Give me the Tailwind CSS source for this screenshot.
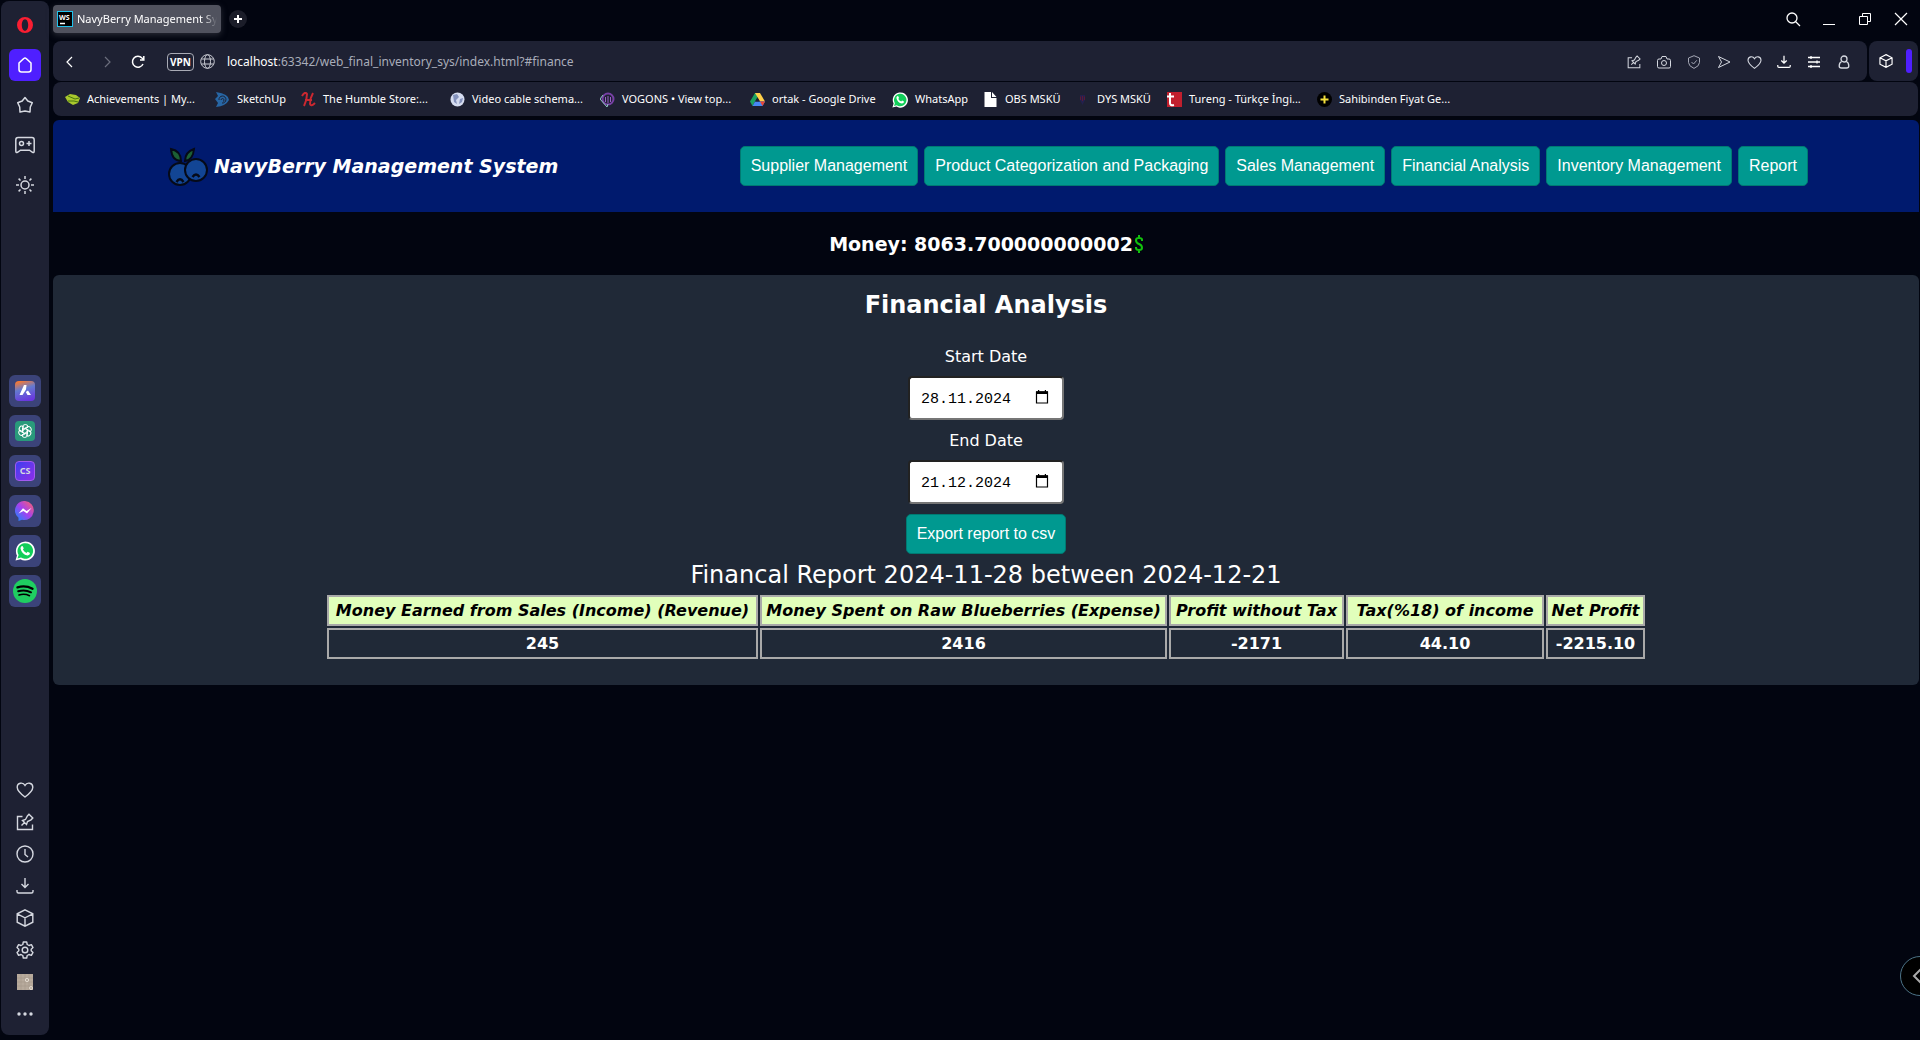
<!DOCTYPE html>
<html lang="en">
<head>
<meta charset="utf-8">
<title>NavyBerry Management System</title>
<script src="https://cdn.jsdelivr.net/npm/@tailwindcss/browser@4"></script>
</head>
<body class="flex min-h-screen gap-1 overflow-x-hidden bg-[#020510] px-px font-['Noto_Sans',sans-serif] text-white">

<!-- shared icon symbols -->
<svg class="hidden">
  <symbol id="heart" viewBox="0 0 18 18"><path d="M9 16C5 13 1.2 10 1.2 6.2 1.2 1.6 7 .8 9 4.4 11 .8 16.800 1.600 16.800 6.200 16.800 10 13 13 9 16Z"/></symbol>
  <symbol id="pin" viewBox="0 0 18 18"><path d="M6.500 3.500H1.500V16.500H16.500V11.500M5.500 12.500 9 9M6.500 7.500 10.500 11.500 11.500 8.500 15 6.800 16.800 5 13 1.200 11.400 3 9.500 6.500Z"/></symbol>
  <symbol id="down" viewBox="0 0 18 18"><path d="M9 1V10.500M5.500 7 9 10.500 12.500 7M1 13V14.500Q1 16 2.500 16H15.500Q17 16 17 14.500V13"/></symbol>
  <symbol id="cube" viewBox="0 0 18 18"><path d="M9 .8 16.800 4.800V13.200L9 17.200 1.200 13.200V4.800ZM1.200 4.800 9 8.800 16.800 4.800M9 8.800V17.200"/></symbol>
  <symbol id="calendar" viewBox="0 0 14 14"><path d="M1.500 2H12.500V13H1.500Z" fill="none" stroke="#000" stroke-width="1.200"/><path d="M1 1.200H13V4H1ZM3 0H4.200V2H3ZM9.800 0H11V2H9.800Z" fill="#000"/></symbol>
  <symbol id="whatsapp" viewBox="0 0 20 20"><path d="M.5 19.500 2 14.500A9.500 9.500 0 1 1 5.500 18.200Z" fill="#fff"/><path d="M2.500 17.500 3.600 14A7.800 7.800 0 1 1 6 16.500Z" fill="#12ce5a"/><path d="M6.500 5.300Q7.600 4.700 8 5.700L8.700 7.300Q8.700 7.800 7.900 8.600 9 10.800 11.500 11.900L12.600 10.700 15 11.900Q15 14.300 12.500 14.400 6.800 13.500 5.500 7.500 5.500 6.200 6.500 5.300Z" fill="#fff"/></symbol>
</svg>

<aside class="mt-px mb-[5px] flex w-12 shrink-0 flex-col items-center rounded-lg bg-[#1e2133] pb-3 text-[#d5d8e0]">
  <a href="#opera" aria-label="Opera" class="mt-4 block"><svg class="size-4" viewBox="0 0 16 16"><path fill="#fa1e32" fill-rule="evenodd" d="M8 0a8 8 0 1 0 0 16A8 8 0 0 0 8 0ZM8 2.200C10 2.200 11.200 5 11.200 8S10 13.800 8 13.800 4.800 11 4.800 8 6 2.200 8 2.200Z"/></svg></a>
  <nav class="mt-4 flex flex-col gap-2" aria-label="Workspaces">
    <a href="#home" aria-label="Home" class="grid size-8 place-items-center rounded-md bg-[#4f1fff]"><svg class="size-4 fill-none stroke-white stroke-[1.5]" viewBox="0 0 16 16"><path d="M8 1Q9 1 14 6V12.500Q14 15 11.500 15H4.500Q2 15 2 12.500V6Q7 1 8 1Z"/></svg></a>
    <a href="#star" aria-label="Favourites" class="grid size-8 place-items-center"><svg class="size-[18px] fill-none stroke-current stroke-[1.5]" viewBox="0 0 18 18" stroke-linejoin="round"><path d="M9 1.500 11.800 5 16.300 6.800 14.300 11 14 16 9 15 4 16 3.700 11 1.700 6.800 6.200 5Z"/></svg></a>
    <a href="#games" aria-label="Games" class="grid size-8 place-items-center"><svg class="size-5 fill-none stroke-current stroke-[1.5]" viewBox="0 0 20 20"><path d="M3 2.500H17Q19.200 2.500 19.200 5V16Q19.200 18 17.500 17.300L14.500 15.200H5.500L2.500 17.300Q.8 18 .8 16V5Q.8 2.500 3 2.500ZM14 6V11M11.500 8.500H16.500"/><circle cx="6.500" cy="8.500" r="2"/></svg></a>
    <a href="#theme" aria-label="Theme" class="grid size-8 place-items-center"><svg class="size-5 fill-none stroke-current stroke-[1.5]" viewBox="0 0 20 20"><circle cx="10" cy="10" r="4"/><path d="M10 1V4M10 16V19M1 10H4M16 10H19M3.600 3.600 5.500 5.500M14.500 14.500 16.400 16.400M3.600 16.400 5.500 14.500M14.500 5.500 16.400 3.600"/></svg></a>
  </nav>
  <nav class="my-auto flex flex-col gap-2" aria-label="Messengers">
    <a href="#aria" aria-label="Aria" class="grid size-8 place-items-center rounded-md bg-[#3b4379]"><svg class="size-5" viewBox="0 0 20 20"><defs><linearGradient id="ag" x1=".3" y1="0" x2=".6" y2="1"><stop stop-color="#f57935"/><stop offset=".4" stop-color="#637ad0"/><stop offset="1" stop-color="#6b35e0"/></linearGradient></defs><rect width="20" height="20" rx="4" fill="url(#ag)"/><path d="M9 4H11.500L11 8.500 7.500 14H4.500ZM10.800 11 13 9.500 16 14H12.500Z" fill="#fff"/></svg></a>
    <a href="#chatgpt" aria-label="ChatGPT" class="grid size-8 place-items-center rounded-md bg-[#3b4379]"><span class="grid size-5 place-items-center rounded bg-[#299a7b]"><svg class="size-4 fill-none stroke-white" viewBox="0 0 16 16"><g id="petal"><path d="M5.500 9.500V4.500Q5.500 1.500 8.300 1.500T11 4.200L7 6.500"/></g><use href="#petal" transform="rotate(60 8 8)"/><use href="#petal" transform="rotate(120 8 8)"/><use href="#petal" transform="rotate(180 8 8)"/><use href="#petal" transform="rotate(240 8 8)"/><use href="#petal" transform="rotate(300 8 8)"/></svg></span></a>
    <a href="#chatsonic" class="grid size-8 place-items-center rounded-md bg-[#3b4379]"><span class="grid size-5 place-items-center rounded border border-[#a35af0] bg-linear-to-br from-[#3a3cf0] to-[#8b2be8] text-[9px] font-bold">CS</span></a>
    <a href="#messenger" aria-label="Messenger" class="grid size-8 place-items-center rounded-md bg-[#3b4379]"><svg class="size-5" viewBox="0 0 20 20"><defs><linearGradient id="mg" x1="0" y1="1" x2="1" y2="0"><stop stop-color="#0d8fff"/><stop offset=".5" stop-color="#a440f0"/><stop offset="1" stop-color="#ff6464"/></linearGradient></defs><path fill="url(#mg)" d="M10 0A9.500 9.500 0 1 1 7 18.700L3.500 20V16.800A9.500 9.500 0 0 1 10 0Z"/><path fill="#fff" d="M3.500 12.500 8 7.200 11.500 10 16.500 7 12 12.600 8.500 10Z"/></svg></a>
    <a href="#whatsapp-panel" aria-label="WhatsApp" class="grid size-8 place-items-center rounded-md bg-[#3b4379]"><svg class="size-5"><use href="#whatsapp"/></svg></a>
    <a href="#spotify" aria-label="Spotify" class="grid size-8 place-items-center rounded-md bg-[#3b4379]"><svg class="size-6" viewBox="0 0 24 24"><circle cx="12" cy="12" r="12" fill="#1fce61"/><g fill="none" stroke="#000" stroke-linecap="round"><path d="M4.500 8.300Q12.500 6 19.500 9.700" stroke-width="2.400"/><path d="M5.200 12.300Q12 10.300 18 13.300" stroke-width="2"/><path d="M6 16Q11.500 14.300 16.500 16.700" stroke-width="1.600"/></g></svg></a>
  </nav>
  <nav class="flex flex-col items-center gap-[14px] *:block" aria-label="Tools">
    <a href="#likes" aria-label="Likes"><svg class="size-[18px] fill-none stroke-current stroke-[1.4]"><use href="#heart"/></svg></a>
    <a href="#pins" aria-label="Pinboards"><svg class="size-[18px] fill-none stroke-current stroke-[1.4]"><use href="#pin"/></svg></a>
    <a href="#history" aria-label="History"><svg class="size-[18px] fill-none stroke-current stroke-[1.4]" viewBox="0 0 18 18"><circle cx="9" cy="9" r="8"/><path d="M9 4V9.500L12 12"/></svg></a>
    <a href="#downloads" aria-label="Downloads"><svg class="size-[18px] fill-none stroke-current stroke-[1.4]"><use href="#down"/></svg></a>
    <a href="#extensions" aria-label="Extensions"><svg class="size-[18px] fill-none stroke-current stroke-[1.4]"><use href="#cube"/></svg></a>
    <a href="#settings" aria-label="Settings"><svg class="size-[18px] fill-none stroke-current stroke-[1.4]" viewBox="0 0 18 18" stroke-linejoin="round"><circle cx="9" cy="9" r="2.800"/><path d="M7.300 1H10.700L11.200 3.500 13 4.500 15.400 3.700 17 6.600 15.200 8.200V9.800L17 11.400 15.400 14.300 13 13.500 11.200 14.500 10.700 17H7.300L6.800 14.500 5 13.500 2.600 14.300 1 11.400 2.800 9.800V8.200L1 6.600 2.600 3.700 5 4.500 6.800 3.500Z"/></svg></a>
    <a href="#board" aria-label="Board"><svg class="size-[18px]" viewBox="0 0 18 18"><path d="M1 1H17V17H1Z" fill="#b7aa9c"/><path d="M1 5H17M1 9H17M1 13H17M5 1V17M9 1V17M13 1V17" stroke="#a5988b" stroke-width=".6"/><circle cx="11" cy="7" r="1.700" fill="none" stroke="#e2dad0"/><circle cx="15" cy="15" r="1.500" fill="none" stroke="#e2dad0"/></svg></a>
    <a href="#more" aria-label="More"><svg class="size-[18px] fill-current" viewBox="0 0 18 18"><circle cx="3" cy="9" r="1.700"/><circle cx="9" cy="9" r="1.700"/><circle cx="15" cy="9" r="1.700"/></svg></a>
  </nav>
</aside>

<div class="flex min-w-0 flex-1 flex-col">
  <div class="flex h-[41px] shrink-0 items-center pr-[10px] pb-[3px]">
    <div class="flex h-7 w-42 items-center gap-1 overflow-hidden rounded-sm bg-[#50525e] px-1 shadow-[0_2px_6px_#50525e80]">
      <svg class="size-4 shrink-0" viewBox="0 0 16 16"><rect x=".5" y=".5" width="15" height="15" stroke="#1fc3ee"/><path d="M3 12.500H8" stroke="#fff" stroke-width="1.300"/><text x="2" y="8.500" font-size="7" font-weight="700" fill="#fff">WS</text></svg>
      <span class="overflow-hidden mask-r-from-90% text-[11px] whitespace-nowrap">NavyBerry Management System</span>
    </div>
    <button aria-label="New tab" class="ml-2 grid size-[18px] place-items-center rounded-full bg-[#1b1d29]"><svg class="size-2 stroke-white stroke-2" viewBox="0 0 8 8"><path d="M4 0V8M0 4H8"/></svg></button>
    <div class="ml-auto flex gap-5 *:grid *:size-4 *:place-items-center">
      <button aria-label="Search tabs"><svg class="size-4 fill-none stroke-white stroke-[1.3]" viewBox="0 0 16 16"><circle cx="7" cy="7" r="5"/><path d="M10.500 10.500 15 15"/></svg></button>
      <button aria-label="Minimise"><svg class="size-4 stroke-white" viewBox="0 0 16 16"><path d="M2 13.500H14"/></svg></button>
      <button aria-label="Restore"><svg class="size-4 fill-none stroke-white" viewBox="0 0 16 16"><path d="M2.500 5.500H10.500V13.500H2.500ZM5.500 5.500V2.500H13.500V10.500H10.500"/></svg></button>
      <button aria-label="Close"><svg class="size-4 stroke-white stroke-[1.2]" viewBox="0 0 16 16"><path d="M2 2 14 14M14 2 2 14"/></svg></button>
    </div>
  </div>

  <div class="mb-px flex h-10 shrink-0 gap-0.5 pr-px">
    <div class="flex flex-1 items-center rounded-lg bg-[#1e2133] px-3 pt-px text-xs">
      <button aria-label="Back" class="w-9"><svg class="h-3 w-2 fill-none stroke-white stroke-[1.2]" viewBox="0 0 8 12"><path d="M7 1 2 6 7 11"/></svg></button>
      <button aria-label="Forward" class="w-[30px]"><svg class="h-3 w-3 fill-none stroke-[#6b6e7d] stroke-[1.2]" viewBox="0 0 12 12"><path d="M4 1 9 6 4 11"/></svg></button>
      <button aria-label="Reload" class="w-9"><svg class="size-[14px] fill-none stroke-white stroke-[1.5]" viewBox="0 0 14 14"><path d="M12 9A5.500 5.500 0 1 1 11 3L12 4M12.800 1V5H9"/></svg></button>
      <button class="h-[18px] w-[27px] rounded border border-[#a9abb5] text-[10px] leading-4 font-bold">VPN</button>
      <svg class="ml-1.5 size-[15px] fill-none stroke-[#c9cbd3]" viewBox="0 0 15 15"><circle cx="7.500" cy="7.500" r="6.800"/><ellipse cx="7.500" cy="7.500" rx="3" ry="6.800"/><path d="M1.500 5H13.500M1.500 10H13.500"/></svg>
      <a href="#finance" class="ml-3 text-[#a9adba]"><span class="text-white">localhost</span>:63342/web_final_inventory_sys/index.html?#finance</a>
      <div class="ml-auto flex gap-4 pr-1 text-[#d5d8e0] *:grid *:size-[14px] *:place-items-center">
        <button aria-label="Pin"><svg class="size-[14px] fill-none stroke-current stroke-[1.3]"><use href="#pin"/></svg></button>
        <button aria-label="Snapshot"><svg class="size-[14px] fill-none stroke-current" viewBox="0 0 14 14"><path d="M2 4H4L5 1.500H9L10 4H12Q13.500 4 13.500 5.500V11.500Q13.500 13 12 13H2Q.5 13 .5 11.500V5.500Q.5 4 2 4Z"/><circle cx="7" cy="8" r="2.500"/></svg></button>
        <button aria-label="Shield"><svg class="size-[14px] fill-none stroke-[#a5a8b5]" viewBox="0 0 14 14"><path d="M7 .7 12.500 3V7.500Q12.500 11 7 13.400 1.500 11 1.500 7.500V3ZM4.500 7 6.500 9 9.800 5.300"/></svg></button>
        <button aria-label="Send"><svg class="size-[14px] fill-none stroke-current" viewBox="0 0 14 14"><path d="M1.500 1.500 13 7 1.500 12.500 4.500 7Z"/></svg></button>
        <button aria-label="Favourite"><svg class="size-[15px] fill-none stroke-current stroke-[1.3]"><use href="#heart"/></svg></button>
        <button aria-label="Download"><svg class="size-[14px] fill-none stroke-white stroke-[1.6]"><use href="#down"/></svg></button>
        <button aria-label="Easy setup"><svg class="size-[14px] fill-none stroke-white stroke-[1.3]" viewBox="0 0 14 14"><path d="M1 2.500H13M1 7H13M1 11.500H13M4 1V4M10 5.500V8.500M4 10V13"/></svg></button>
        <button aria-label="Profile"><svg class="size-[14px] fill-none stroke-current stroke-[1.3]" viewBox="0 0 14 14"><circle cx="7" cy="4" r="3"/><path d="M4.700 6.500Q2.200 7.500 2.200 11 2.200 13 4.500 13H9.500Q11.800 13 11.800 11 11.800 7.500 9.300 6.500"/></svg></button>
      </div>
    </div>
    <div class="flex w-[49px] items-center justify-between rounded-lg bg-[#1e2133] pr-1.5 pl-[10px]">
      <button aria-label="Extensions"><svg class="size-[14px] fill-none stroke-white stroke-[1.5]"><use href="#cube"/></svg></button>
      <span class="h-6 w-1.5 rounded-full bg-[#4f1fff]"></span>
    </div>
  </div>

  <nav aria-label="Bookmarks" class="mr-px mb-1 flex h-[34px] shrink-0 items-center rounded-lg bg-[#1e2133] pt-px pl-3 text-[11px] whitespace-nowrap *:flex *:shrink-0 *:items-center *:gap-[7px]">
    <a href="#b1" class="w-[150px]"><svg class="size-[15px]" viewBox="0 0 15 15"><path d="M0 5 5 2 11 3 15 6 13 11 8 13 3 10Z" fill="#a9c82d"/><path d="M3 4 10 7 14 6M3 9 9 9 13 10" stroke="#47750e" fill="none"/></svg>Achievements | My...</a>
    <a href="#b2" class="w-[86px]"><svg class="size-[15px]" viewBox="0 0 15 15"><path d="M1 0Q14 2 14 8 11 14 1 15L3 11 0 7 3 4Z" fill="#2766a5"/><path d="M4 8A3.500 3.500 0 1 1 7 11M6 8A1.500 1.500 0 1 1 8 9.500" stroke="#1e2133" fill="none"/></svg>SketchUp</a>
    <a href="#b3" class="w-[149px]"><svg class="size-[15px] fill-none stroke-[#cb2830] stroke-2" viewBox="0 0 15 15"><path d="M1 4Q4 -1 6 2 6 8 3 14M12 1Q9 6 9 12 10 15 14 11M4 8H11"/></svg>The Humble Store:...</a>
    <a href="#b4" class="w-[150px]"><svg class="size-[15px]" viewBox="0 0 15 15"><circle cx="7.500" cy="7.500" r="7" fill="#d5dcf0"/><path d="M3 3 7 2 9 5 6 8 7 12 4 10ZM10 7 13 6 12 10 9 12Z" fill="#8492bd"/></svg>Video cable schema...</a>
    <a href="#b5" class="w-[150px]"><svg class="size-[15px] fill-none" viewBox="0 0 15 15"><circle cx="8" cy="7" r="5.500" stroke="#7740a5" stroke-width="2"/><path d="M8 4V11M5.500 5V10M10.500 5V10" stroke="#9862c4"/><path d="M3 3 0 7 7 15 8 12" stroke="#8fc9c2"/></svg>VOGONS • View top...</a>
    <a href="#b6" class="w-[142px]"><svg class="size-[15px]" viewBox="0 0 15 15"><path d="M5 1H10L5 9.500 2.500 14 0 9.500Z" fill="#1ba261"/><path d="M5 1H10L15 9.500H10Z" fill="#ffcf48"/><path d="M5 9.500H15L12.500 14H2.500Z" fill="#4688f4"/><path d="M10 9.500H15L12.500 14Z" fill="#ea4435"/><path d="M7.500 5.500 9.800 9.500H5.200Z" fill="#1e2133"/></svg>ortak - Google Drive</a>
    <a href="#b7" class="w-[91px]"><svg class="size-4"><use href="#whatsapp"/></svg>WhatsApp</a>
    <a href="#b8" class="w-[92px]"><svg class="size-[15px] fill-white" viewBox="0 0 15 15"><path d="M1.500 0H8V6H13.500V15H1.500ZM9 0 13.500 5H9Z"/></svg>OBS MSKÜ</a>
    <a href="#b9" class="w-[92px]"><svg class="size-[15px]" viewBox="0 0 15 15"><path d="M5 3H10V8L7.500 13 5 8Z" fill="#23204d"/><path d="M5.500 4.500V8M7.500 4V9M9.500 4.500V8" stroke="#5c1836"/></svg>DYS MSKÜ</a>
    <a href="#b10" class="w-[150px]"><svg class="size-[15px]" viewBox="0 0 15 15"><path d="M0 0H15V15H0Z" fill="#c11f2e"/><path d="M3 1V11Q3 14 7 13M0 4.500H7" fill="none" stroke="#fff" stroke-width="2"/></svg>Tureng - Türkçe İngi...</a>
    <a href="#b11" class="w-[150px]"><svg class="size-[15px]" viewBox="0 0 15 15"><circle cx="7.500" cy="7.500" r="7.500"/><path d="M7.500 3.500V11.500M3.500 7.500H11.500" stroke="#f4e03c" stroke-width="2"/></svg>Sahibinden Fiyat Ge...</a>
  </nav>

  <div class="flex-1 font-['DejaVu_Sans',sans-serif] text-base">
    <header class="flex h-[92px] items-center justify-between rounded-t-md bg-[#001a6e] pr-[111px] pl-[115px]">
      <h1 class="flex items-center gap-1.5 pt-px text-[19px] font-bold whitespace-nowrap italic">
        <svg class="size-10" viewBox="0 0 40 40" stroke="#050a18" stroke-width="2"><path d="M3 2Q13 4 13 14 4 14 3 2ZM26 2Q17 5 17 14 25 13 26 2Z" fill="#1c6035"/><circle cx="12" cy="27" r="11" fill="#124594"/><circle cx="28" cy="23" r="11" fill="#124594"/><path d="M8.500 35Q12 29.500 15.500 35M24.500 30Q28 25 31.500 30" fill="none" stroke-width="2.400"/></svg>
        NavyBerry Management System
      </h1>
      <nav class="flex gap-1.5 font-['Liberation_Sans',sans-serif]" aria-label="Sections">
        <button class="h-10 rounded-[5px] border border-[#007a72] bg-[#009990] px-2.5 whitespace-nowrap">Supplier Management</button>
        <button class="h-10 rounded-[5px] border border-[#007a72] bg-[#009990] px-2.5 whitespace-nowrap">Product Categorization and Packaging</button>
        <button class="h-10 rounded-[5px] border border-[#007a72] bg-[#009990] px-2.5 whitespace-nowrap">Sales Management</button>
        <button class="h-10 rounded-[5px] border border-[#007a72] bg-[#009990] px-2.5 whitespace-nowrap">Financial Analysis</button>
        <button class="h-10 rounded-[5px] border border-[#007a72] bg-[#009990] px-2.5 whitespace-nowrap">Inventory Management</button>
        <button class="h-10 rounded-[5px] border border-[#007a72] bg-[#009990] px-2.5 whitespace-nowrap">Report</button>
      </nav>
    </header>

    <h2 class="flex h-[63px] items-center justify-center gap-0.5 pt-px text-[19px] font-bold">Money: 8063.700000000002<svg class="h-[18px] w-2 fill-none stroke-[#12c20c] stroke-2" viewBox="0 0 8 18"><path d="M7 6V4.500Q7 3 4 3T1 5Q1 8 4 9T7 13Q7 15 4 15T1 13V12M4 0V3M4 15V18"/></svg></h2>

    <main class="flex flex-col items-center rounded-md bg-[#202937] pt-3 pb-6">
      <h2 class="text-2xl leading-9 font-bold">Financial Analysis</h2>
      <label for="start" class="mt-[22px] leading-6">Start Date</label>
      <div class="relative mt-[7px]">
        <input id="start" type="text" value="28.11.2024" class="block h-11 w-39 rounded border-2 border-t-[#222] border-r-[#767676] border-b-[#767676] border-l-[#222] bg-white px-[11px] pt-0.5 font-['Liberation_Mono',monospace] text-[15px] text-black">
        <svg class="pointer-events-none absolute top-3.5 right-[15px] size-[14px]"><use href="#calendar"/></svg>
      </div>
      <label for="end" class="mt-[9px] leading-6">End Date</label>
      <div class="relative mt-[7px]">
        <input id="end" type="text" value="21.12.2024" class="block h-11 w-39 rounded border-2 border-t-[#222] border-r-[#767676] border-b-[#767676] border-l-[#222] bg-white px-[11px] pt-0.5 font-['Liberation_Mono',monospace] text-[15px] text-black">
        <svg class="pointer-events-none absolute top-3.5 right-[15px] size-[14px]"><use href="#calendar"/></svg>
      </div>
      <button class="mt-[10px] h-10 rounded-[5px] border border-[#007a72] bg-[#009990] px-2.5 font-['Liberation_Sans',sans-serif] whitespace-nowrap">Export report to csv</button>
      <table class="border-separate border-spacing-0.5 text-center font-bold">
        <caption class="h-[39px] pt-px text-2xl leading-10 font-normal">Financal Report 2024-11-28 between 2024-12-21</caption>
        <thead>
          <tr class="h-[31px] bg-[#e1ffbb] whitespace-nowrap text-black italic">
            <th scope="col" class="w-[431px] border-2 border-[#a9a9a9] p-0">Money Earned from Sales (Income) (Revenue)</th>
            <th scope="col" class="w-[407px] border-2 border-[#a9a9a9] p-0">Money Spent on Raw Blueberries (Expense)</th>
            <th scope="col" class="w-[175px] border-2 border-[#a9a9a9] p-0">Profit without Tax</th>
            <th scope="col" class="w-[198px] border-2 border-[#a9a9a9] p-0">Tax(%18) of income</th>
            <th scope="col" class="w-[99px] border-2 border-[#a9a9a9] p-0">Net Profit</th>
          </tr>
        </thead>
        <tbody>
          <tr class="h-[31px]">
            <td class="border-2 border-[#a9a9a9] p-0">245</td>
            <td class="border-2 border-[#a9a9a9] p-0">2416</td>
            <td class="border-2 border-[#a9a9a9] p-0">-2171</td>
            <td class="border-2 border-[#a9a9a9] p-0">44.10</td>
            <td class="border-2 border-[#a9a9a9] p-0">-2215.10</td>
          </tr>
        </tbody>
      </table>
    </main>
  </div>
</div>

<button aria-label="Open panel" class="fixed -right-5 bottom-11 grid size-10 place-items-center rounded-full border border-[#4c7386] bg-black"><svg class="h-4 w-5 fill-none stroke-[#aaa] stroke-2" viewBox="0 0 20 16"><path d="M11 1 4 8 11 15"/></svg></button>
</body>
</html>
